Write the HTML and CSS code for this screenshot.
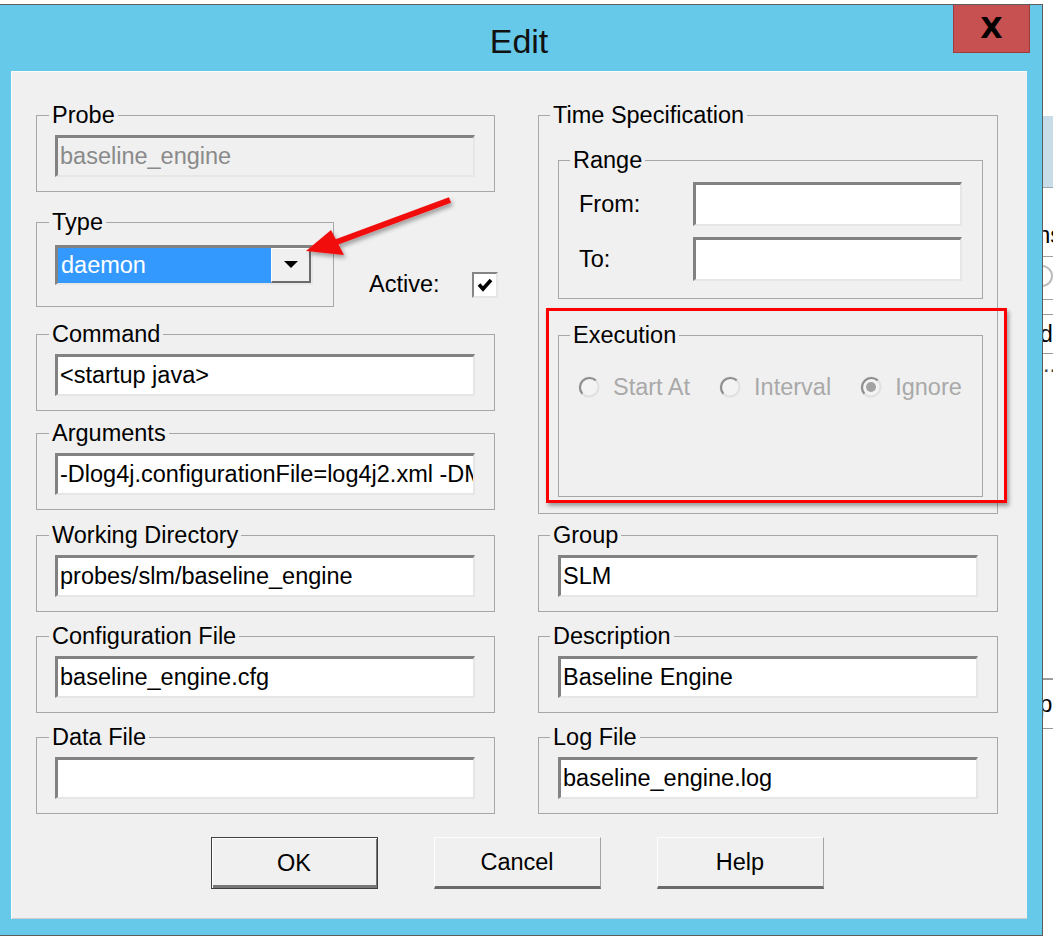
FILE: index.html
```html
<!DOCTYPE html>
<html>
<head>
<meta charset="utf-8">
<title>Edit</title>
<link rel="stylesheet" href="styles.css">
</head>
<body>
<div class="screen">
  <div class="window">
    <div class="titlebar">
      <span class="tb-spacer"></span>
      <div class="title">Edit</div>
      <div class="close-wrap"><div class="close">X</div></div>
    </div>
    <div class="client">
      <div class="top">
        <div class="col">
          <fieldset class="grp g-std g-probe">
            <legend>Probe</legend>
            <div class="field disabled">baseline_engine</div>
          </fieldset>
          <div class="type-row">
            <fieldset class="grp g-type">
              <legend>Type</legend>
              <div class="combo">
                <span class="combo-sel">daemon</span>
                <span class="combo-btn"><svg width="14" height="8" viewBox="0 0 14 8"><polygon points="0,0 14,0 7,7" fill="#000"/></svg></span>
              </div>
            </fieldset>
            <div class="active">
              <span class="active-label">Active:</span>
              <span class="check"><svg width="16" height="14" viewBox="0 0 16 14"><path d="M2 6.5 L6 11 L14 2" fill="none" stroke="#000" stroke-width="3.6"/></svg></span>
            </div>
          </div>
          <fieldset class="grp g-std g-cmd">
            <legend>Command</legend>
            <div class="field">&lt;startup java&gt;</div>
          </fieldset>
          <fieldset class="grp g-std g-args">
            <legend>Arguments</legend>
            <div class="field clip">-Dlog4j.configurationFile=log4j2.xml -DMaxHeap</div>
          </fieldset>
        </div>
        <div class="col">
          <fieldset class="grp g-time">
            <legend>Time Specification</legend>
            <fieldset class="grp g-range">
              <legend>Range</legend>
              <div class="range-row"><span class="range-label">From:</span><div class="field"></div></div>
              <div class="range-row"><span class="range-label">To:</span><div class="field"></div></div>
            </fieldset>
            <fieldset class="grp g-exec">
              <legend>Execution</legend>
              <div class="radios">
                <span class="radio"><svg width="22" height="22" viewBox="0 0 22 22"><circle cx="11" cy="11" r="9.5" fill="#f3f3f3" stroke="#e0e0e0" stroke-width="2"/><path d="M4.3 17.7 A9.5 9.5 0 0 1 17.7 4.3" fill="none" stroke="#8e8e8e" stroke-width="2.2"/></svg><span>Start At</span></span>
                <span class="radio"><svg width="22" height="22" viewBox="0 0 22 22"><circle cx="11" cy="11" r="9.5" fill="#f3f3f3" stroke="#e0e0e0" stroke-width="2"/><path d="M4.3 17.7 A9.5 9.5 0 0 1 17.7 4.3" fill="none" stroke="#8e8e8e" stroke-width="2.2"/></svg><span>Interval</span></span>
                <span class="radio"><svg width="22" height="22" viewBox="0 0 22 22"><circle cx="11" cy="11" r="9.5" fill="#f3f3f3" stroke="#e0e0e0" stroke-width="2"/><path d="M4.3 17.7 A9.5 9.5 0 0 1 17.7 4.3" fill="none" stroke="#8e8e8e" stroke-width="2.2"/><circle cx="11" cy="11" r="5" fill="#a3a3a3"/></svg><span>Ignore</span></span>
              </div>
            </fieldset>
          </fieldset>
        </div>
      </div>
      <div class="grid">
        <fieldset class="grp g-std"><legend>Working Directory</legend><div class="field">probes/slm/baseline_engine</div></fieldset>
        <fieldset class="grp g-std"><legend>Group</legend><div class="field">SLM</div></fieldset>
        <fieldset class="grp g-std"><legend>Configuration File</legend><div class="field">baseline_engine.cfg</div></fieldset>
        <fieldset class="grp g-std"><legend>Description</legend><div class="field">Baseline Engine</div></fieldset>
        <fieldset class="grp g-std"><legend>Data File</legend><div class="field"></div></fieldset>
        <fieldset class="grp g-std"><legend>Log File</legend><div class="field">baseline_engine.log</div></fieldset>
      </div>
      <div class="buttons">
        <div class="btn default">OK</div>
        <div class="btn">Cancel</div>
        <div class="btn">Help</div>
      </div>
      <div class="highlight"></div>
    </div>
  </div>
  <div class="backapp">
    <div class="ba-head"></div>
    <div class="ba-gap1"></div>
    <div class="ba-text">Options</div>
    <div class="ba-line"></div>
    <div class="ba-circ"></div>
    <div class="ba-line2"></div>
    <div class="ba-cell">Field</div>
    <div class="ba-dots">...</div>
    <div class="ba-blank"></div>
    <div class="ba-line"></div>
    <div class="ba-text2">Help</div>
  </div>
</div>
<svg class="arrow" width="1053" height="948" viewBox="0 0 1053 948">
  <defs>
    <filter id="sh" x="-20%" y="-40%" width="150%" height="180%">
      <feDropShadow dx="2" dy="3" stdDeviation="2" flood-color="#000" flood-opacity="0.35"/>
    </filter>
  </defs>
  <g filter="url(#sh)">
    <line x1="450" y1="200" x2="334" y2="243" stroke="#f20c0c" stroke-width="6"/>
    <polygon points="306,251 331,230 344,255" fill="#f20c0c"/>
  </g>
</svg>
</body>
</html>
```
FILE: styles.css
```css
* { box-sizing: border-box; }
html, body { margin: 0; padding: 0; background: #fff; }
body {
  width: 1053px;
  height: 948px;
  overflow: hidden;
  position: relative;
  font-family: "Liberation Sans", Arial, sans-serif;
  font-size: 23.5px;
  color: #000;
}
.screen { display: flex; padding-top: 4px; }

.window {
  width: 1043px;
  height: 932px;
  flex: none;
  background: #66c9ea;
  border: 1px solid #5d5d5d;
  border-left: none;
  display: flex;
  flex-direction: column;
}

.titlebar {
  height: 66px;
  display: grid;
  grid-template-columns: 1fr auto 1fr;
  align-items: start;
}
.title {
  font-size: 34px;
  line-height: 40px;
  padding-top: 16px;
  margin-left: -4px;
  color: #111;
}
.close-wrap { display: flex; justify-content: flex-end; padding-right: 12px; }
.close {
  width: 77px;
  height: 48px;
  background: #c75050;
  border: 1px solid #a03c3c;
  border-top: none;
  display: flex;
  align-items: center;
  justify-content: center;
  font-family: "DejaVu Sans", sans-serif;
  font-weight: bold;
  font-size: 29px;
  padding-bottom: 2px;
  color: #000;
}

.client {
  position: relative;
  margin: 0 15px 0 11px;
  height: 848px;
  background: #f0f0f0;
  padding: 31px 29px 30px 25px;
  box-shadow: inset 1px 1px 0 #fbfbfb, inset 0 -1px 0 #cfcfcf;
}

.top, .grid {
  display: grid;
  grid-template-columns: 459px 460px;
  column-gap: 43px;
}
.top { height: 412px; align-items: start; }
.col { display: flex; flex-direction: column; }

.grp {
  margin: 0;
  min-width: 0;
  border: 1px solid #a7a7a7;
  padding: 0 19px;
}
.grp legend {
  margin-left: -8px;
  padding: 0 3px;
  font-size: 23.5px;
  line-height: 26px;
  color: #000;
}

.g-std { height: 90px; padding: 7px 19px 14px 19px; }
.col .g-std, .grid .g-std:nth-child(2n+1) { padding-left: 18px; }
.col .g-std legend, .grid .g-std:nth-child(2n+1) legend { margin-left: -6px; }

.type-row { display: flex; align-items: flex-end; margin-top: 17px; }
.g-type { flex: none; width: 298px; height: 98px; padding: 10px 18px 21px 18px; }
.g-type legend { margin-left: -6px; }
.g-cmd { margin-top: 14px; }
.g-args { margin-top: 9px; }

.field {
  height: 42px;
  background: #fff;
  border-style: solid;
  border-width: 3px 2px 2px 3px;
  border-color: #828282 #e6e6e6 #e6e6e6 #828282;
  padding: 0 0 0 2px;
  display: flex;
  align-items: center;
  white-space: nowrap;
  overflow: hidden;
  font-size: 23.5px;
  color: #000;
}
.field.disabled { background: #f0f0f0; color: #8a8a8a; }

.combo {
  width: 258px;
  height: 40px;
  display: flex;
  border-style: solid;
  border-width: 3px 2px 2px 3px;
  border-color: #828282 #e6e6e6 #e6e6e6 #828282;
  background: #fff;
}
.combo-sel {
  flex: 1;
  background: #3399ff;
  color: #fff;
  display: flex;
  align-items: center;
  padding-left: 3px;
}
.combo-btn {
  width: 40px;
  background: #f0f0f0;
  border-style: solid;
  border-width: 1px 2px 2px 1px;
  border-color: #fdfdfd #6b6b6b #6b6b6b #fdfdfd;
  display: flex;
  align-items: center;
  justify-content: center;
}

.active {
  flex: none;
  display: flex;
  align-items: center;
  margin-left: 35px;
  margin-bottom: 9px;
}
.active-label { margin-right: 32px; }
.check {
  width: 26px;
  height: 26px;
  background: #fff;
  border-style: solid;
  border-width: 2px;
  border-color: #858585 #e6e6e6 #e6e6e6 #858585;
  display: flex;
  align-items: center;
  justify-content: center;
}

.g-time { height: 412px; padding: 19px 14px 16px 19px; }
.g-range { height: 152px; padding: 9px 20px 16px 20px; }
.g-range legend { margin-left: -9px; }
.range-row { display: flex; align-items: center; }
.range-row + .range-row { margin-top: 11px; }
.range-label { width: 114px; flex: none; }
.range-row .field { flex: 1; height: 44px; }

.g-exec { margin-top: 23px; height: 175px; padding: 26px 19px 96px 19px; }
.radios { display: flex; align-items: center; height: 26px; }
.radio { flex: none; white-space: nowrap; display: flex; align-items: center; color: #a9a9a9; margin-right: 29px; }
.radio svg { margin-right: 13px; flex: none; }

.grid {
  margin-top: 8px;
  grid-template-rows: 90px 90px 90px;
  row-gap: 11px;
}

.buttons {
  margin-top: 23px;
  display: flex;
  justify-content: center;
  gap: 56px;
}
.btn {
  width: 167px;
  height: 52px;
  background: #f0f0f0;
  border-style: solid;
  border-width: 1px 1px 3px 1px;
  border-color: #fdfdfd #a3a3a3 #6a6a6a #fdfdfd;
  display: flex;
  align-items: center;
  justify-content: center;
  color: #000;
}
.btn.default {
  border: 1px solid #3f3f3f;
  box-shadow: inset 1px 1px 0 #fff, inset -1px -3px 0 #777;
}

.highlight {
  position: absolute;
  left: 535px;
  top: 237px;
  width: 461px;
  height: 195px;
  border: 3px solid #ff0000;
  box-shadow: 2px 3px 4px rgba(0,0,0,0.35);
}

.backapp {
  width: 10px;
  flex: none;
  height: 944px;
  overflow: hidden;
  background: #fff;
  display: flex;
  flex-direction: column;
  font-size: 23.5px;
}
.ba-head { height: 72px; background: #c9dde8; border-bottom: 1px solid #9aa9b2; margin-top: 112px; flex: none; }
.ba-gap1 { height: 34px; flex: none; }
.ba-text, .ba-text2, .ba-cell {
  display: flex;
  white-space: nowrap;
  height: 26px;
  line-height: 26px;
  flex: none;
  color: #000;
}
.ba-text { margin-left: -62px; }
.ba-cell { margin-left: -41px; border-bottom: 1px solid #9a9a9a; border-top: 1px solid #9a9a9a; height: 40px; line-height: 38px; margin-top: 14px; }
.ba-text2 { margin-left: -39px; border-top: 1px solid #9a9a9a; border-bottom: 1px solid #9a9a9a; height: 50px; line-height: 48px; }
.ba-line { height: 1px; background: #a0a0a0; margin-top: 8px; flex: none; }
.ba-line2 { height: 1px; background: #a0a0a0; margin-top: 12px; flex: none; }
.ba-circ { height: 22px; width: 22px; border-radius: 50%; border: 2px solid #bbb; margin: 8px 0 0 -12px; flex: none; }
.ba-dots { height: 26px; line-height: 20px; color: #444; flex: none; }
.ba-blank { height: 290px; flex: none; }

.arrow {
  position: absolute;
  left: 0;
  top: 0;
  pointer-events: none;
}
```
